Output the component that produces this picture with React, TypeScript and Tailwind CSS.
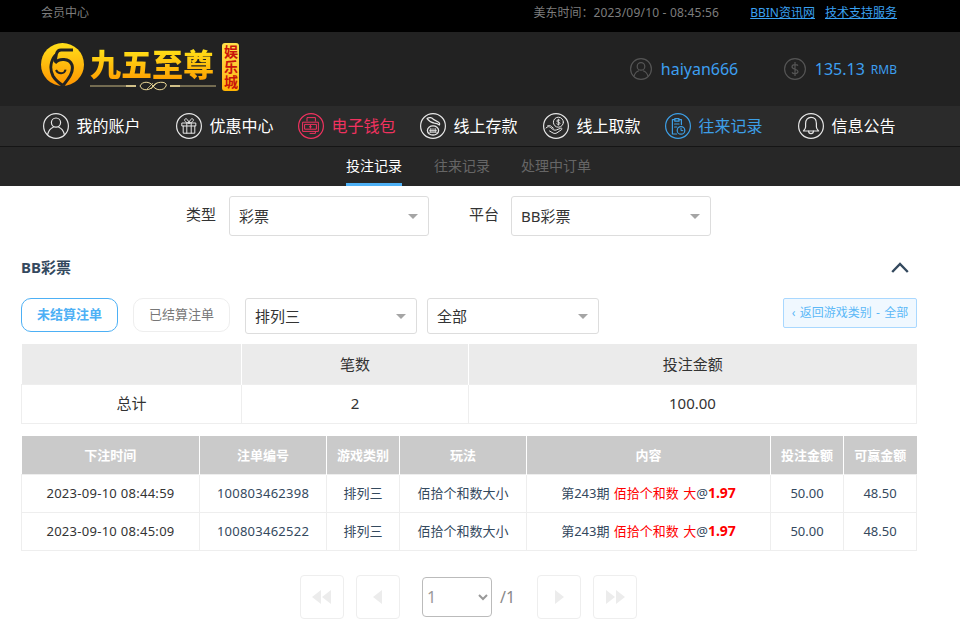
import React from 'react';

const font = { fontFamily: '"Noto Sans", "Noto Sans CJK SC", sans-serif' };

type IconProps = { color: string };

function Ring({ color, children }: IconProps & { children: React.ReactNode }) {
  return (
    <svg width="26" height="26" viewBox="0 0 26 26" fill="none" stroke={color} strokeWidth="1" strokeLinecap="round" strokeLinejoin="round" className="shrink-0">
      <circle cx="13" cy="13" r="12.4" strokeWidth="1.2" />
      {children}
    </svg>
  );
}

const navIcons: Record<string, (color: string) => React.ReactNode> = {
  user: (c) => (
    <Ring color={c}>
      <circle cx="13" cy="9.6" r="4.6" strokeWidth="1.2" />
      <path d="M4.6 21.6c1-4.2 3.6-6.6 5.6-7.4M21.4 21.6c-1-4.2-3.6-6.6-5.6-7.4" strokeWidth="1.2" />
    </Ring>
  ),
  gift: (c) => (
    <Ring color={c}>
      <path d="M6.2 10h13.6v3H6.2zM7.2 13v7.2h11.6V13M10.8 10v10.2M15.2 10v10.2" />
      <path d="M13 10c-2.6-.2-5-1.6-4.2-3.6.9-1.6 3.2-.4 4.2 3.6zM13 10c2.6-.2 5-1.6 4.2-3.6-.9-1.6-3.2-.4-4.2 3.6z" />
    </Ring>
  ),
  wallet: (c) => (
    <Ring color={c}>
      <path d="M9 8V4.6h8.4v3.6M17.4 18.4v2H12" />
      <path d="M5 9.2h15.4v9.2H5zM7 11.4h11.4v4.8H7z" />
      <path d="M12.4 12.4v2.8M11.4 13.8h2" />
    </Ring>
  ),
  deposit: (c) => (
    <Ring color={c}>
      <path d="M7 5.6c2.4-1.8 5.2-1 6.4.8l4.8 2.6c1.4.8 1.8 2 1.2 3-1.6-1-3.2-1.6-5-1.8-2.4-.4-5-1.6-7.4-4.6z" strokeWidth="1.2" />
      <ellipse cx="13" cy="17.4" rx="5.6" ry="4.6" strokeWidth="1.3" />
      <path d="M9.6 17.4h6.8M9.6 19.2h6.8M10.4 15.6v3.6M12 15.6v3.6M14 15.6v3.6M15.6 15.6v3.6" strokeWidth=".8" />
    </Ring>
  ),
  withdraw: (c) => (
    <Ring color={c}>
      <circle cx="15.4" cy="9.2" r="5" />
      <path d="M15.4 6.2v6M17 7.4c-.6-.8-3.2-.8-3.2.7s3.2.7 3.2 2.2-2.6 1.4-3.2.6" strokeWidth=".9" />
      <path d="M3 15c1.6-1.6 3-1.8 4.4-.6l2.8 2.2c1 .8 2.8.6 3.6.2l4-1.6c1-.3 1.6.6.8 1.4l-4.6 3.2c-1.4.9-2.8.8-4 .2l-3.4-2M4.6 12.8c1.2-.6 2.6-.4 3.6.6l2.2 1.8" />
    </Ring>
  ),
  records: (c) => (
    <Ring color={c}>
      <path d="M11.6 21H7.4V6.6h2.4M14 6.6h2.4v5" strokeWidth="1.2" />
      <path d="M9.8 5.6h4.2v2.6H9.8zM9.6 11h4.4M9.6 14h2.2" strokeWidth="1.2" />
      <circle cx="16" cy="17.4" r="3.8" strokeWidth="1.2" />
      <path d="M16 15.4v2.2h1.8" />
    </Ring>
  ),
  bell: (c) => (
    <Ring color={c}>
      <path d="M13 4.4c-3.4 0-5.4 2.6-5.4 6v3.6c0 1.6-1 2.6-2.2 4h15.2c-1.2-1.4-2.2-2.4-2.2-4v-3.6c0-3.4-2-6-5.4-6z" strokeWidth="1.2" />
      <path d="M10.6 18.2c0 3.2 4.8 3.2 4.8 0" strokeWidth="1.2" />
    </Ring>
  ),
};

const navItems = [
  { label: '我的账户', icon: 'user', color: '#ffffff', w: 'w-[133px]' },
  { label: '优惠中心', icon: 'gift', color: '#ffffff', w: 'w-[122px]' },
  { label: '电子钱包', icon: 'wallet', color: '#f0325f', w: 'w-[122px]' },
  { label: '线上存款', icon: 'deposit', color: '#ffffff', w: 'w-[123px]' },
  { label: '线上取款', icon: 'withdraw', color: '#ffffff', w: 'w-[122px]' },
  { label: '往来记录', icon: 'records', color: '#3d9fe6', w: 'w-[133px]' },
  { label: '信息公告', icon: 'bell', color: '#ffffff', w: 'w-[122px]' },
];

function Logo() {
  return (
    <div className="flex items-start pt-[11px] pl-[41px]">
      <svg width="43" height="43" viewBox="0 0 43 43" className="shrink-0">
        <defs>
          <linearGradient id="coin" x1="0" y1="0" x2="0" y2="1">
            <stop offset="0" stopColor="#ffdf1a" />
            <stop offset="1" stopColor="#ff9400" />
          </linearGradient>
        </defs>
        <circle cx="21.5" cy="21.5" r="21.5" fill="url(#coin)" />
        <g fill="none" stroke="#222222" strokeWidth="3">
          <path d="M32 7H20c-2.6 0-4 1.6-4.6 4L14 19" />
          <path d="M14.6 12C9.6 18 8.4 26 12 33c2.4 4.2 6 7 10 9.6" />
          <path d="M14 20c4-5 14.4-5 17 2 2 7-3.4 13.6-9 20.6" />
          <path d="M15 27c2 4.4 8.6 4.2 9.6-.4" strokeWidth="2" />
        </g>
      </svg>
      <div className="ml-[6px] w-[126px] pt-[3px]">
        <div className="bg-gradient-to-b from-[#ffe81a] to-[#ff9c00] bg-clip-text text-[31px] leading-[36px] font-black whitespace-nowrap text-transparent">
          九五至尊
        </div>
        <svg width="126" height="10" viewBox="0 0 126 10" className="mt-[-1px] block" fill="none" stroke="#f0dc9a">
          <path d="M0 5h46M80 5h46" strokeWidth=".8" />
          <path d="M36 5h10M80 5h10" strokeWidth="1.6" />
          <path d="M50 5c2-5 10-5 13 0s11 5 13 0-10-5-13 0-11 5-13 0z" strokeWidth="1" />
          <path d="M57 8l6-6M61 8l6-6" strokeWidth=".7" />
        </svg>
      </div>
      <div className="ml-[6px] flex h-[48px] w-[17px] items-center justify-center rounded-[3px] bg-gradient-to-b from-[#ffe14a] to-[#ffb400] text-[14px] leading-[17px] font-bold tracking-[1px] text-[#c8140a] [writing-mode:vertical-rl]">
        娱乐城
      </div>
    </div>
  );
}

function Caret() {
  return <span className="h-0 w-0 border-x-[5px] border-t-[5px] border-x-transparent border-t-[#a5a5a5]" />;
}

function FakeSelect({ value, className }: { value: string; className: string }) {
  return (
    <div className={`flex items-center justify-between rounded-[3px] border border-[#dddddd] bg-white text-[15px] text-[#333333] ${className}`}>
      <span>{value}</span>
      <Caret />
    </div>
  );
}

function PageBtn({ d }: { d: string }) {
  return (
    <button className="flex h-[44px] w-[44px] items-center justify-center rounded-[4px] border border-[#eeeeee] bg-white">
      <svg width="22" height="14" viewBox="0 0 22 14" fill="#ececec">
        <path d={d} />
      </svg>
    </button>
  );
}

const rows = [
  { time: '2023-09-10 08:44:59', id: '100803462398' },
  { time: '2023-09-10 08:45:09', id: '100803462522' },
];

const headers = ['下注时间', '注单编号', '游戏类别', '玩法', '内容', '投注金额', '可赢金额'];

export default function App() {
  return (
    <div style={font} className="min-h-[627px] bg-white text-[14px]">
      <div className="flex h-[32px] justify-between bg-black pt-[5px] pr-[63px] pl-[41px] text-[12px] leading-[16px] text-[#7d7d7d]">
        <span>会员中心</span>
        <div className="flex">
          <span>
            美东时间：<span className="tracking-[0.2px]">2023/09/10 - 08:45:56</span>
          </span>
          <a className="ml-[31px] text-[#3aa2f2] underline">BBIN资讯网</a>
          <a className="ml-[10px] text-[#3aa2f2] underline">技术支持服务</a>
        </div>
      </div>

      <div className="flex h-[74px] justify-between bg-[#222222]">
        <Logo />
        <div className="flex items-center pr-[63px] text-[#3d9ff0]">
          <svg width="22" height="22" viewBox="0 0 22 22" fill="none" stroke="#555555" strokeWidth="1.2">
            <circle cx="11" cy="11" r="10.4" />
            <circle cx="11" cy="8.4" r="3.8" />
            <path d="M4 18.4c.8-3.4 3-5 5-5.6M18 18.4c-.8-3.4-3-5-5-5.6" />
          </svg>
          <span className="ml-[9px] w-[123px] text-[16px]">haiyan666</span>
          <svg width="22" height="22" viewBox="0 0 22 22" fill="none" stroke="#555555" strokeWidth="1.2">
            <circle cx="11" cy="11" r="10.4" />
            <path d="M11 4v14M14 7.6c-.8-1.4-6-1.6-6 1.2S14 11 14 13.6s-5 2.6-6 .8" />
          </svg>
          <span className="ml-[9px] text-[16px]">135.13</span>
          <span className="ml-[6px] pt-[2px] text-[12px]">RMB</span>
        </div>
      </div>

      <nav className="flex h-[40px] items-center bg-[#2b2b2b] pl-[43px]">
        {navItems.map((item) => (
          <a key={item.label} className={`flex items-center gap-[7.5px] text-[16px] ${item.w}`} style={{ color: item.color }}>
            {navIcons[item.icon](item.color === '#ffffff' ? '#e6e6e6' : item.color)}
            <span className="whitespace-nowrap">{item.label}</span>
          </a>
        ))}
      </nav>

      <div className="flex h-[40px] border-t border-[#151515] bg-[#272727] pl-[346px] text-[14px] leading-[37px] text-[#666666]">
        <a className="h-[39px] w-[56px] border-b-[3px] border-[#4db0f5] whitespace-nowrap text-white">投注记录</a>
        <a className="ml-[32px] w-[56px] whitespace-nowrap">往来记录</a>
        <a className="ml-[31px] whitespace-nowrap">处理中订单</a>
      </div>

      <div className="flex items-center pt-[10px] pl-[186px] text-[15px] text-[#333333]">
        <span className="mb-[3px]">类型</span>
        <FakeSelect value="彩票" className="ml-[13px] h-[40px] w-[200px] pr-[10px] pl-[9px]" />
        <span className="mb-[3px] ml-[40px]">平台</span>
        <FakeSelect value="BB彩票" className="ml-[12px] h-[40px] w-[200px] pr-[10px] pl-[9px]" />
      </div>

      <div className="mt-[21px] ml-[21px] flex h-[20px] w-[896px] items-center justify-between pr-[8px]">
        <b className="text-[15px] font-bold text-[#34495e]">BB彩票</b>
        <svg width="18" height="11" viewBox="0 0 18 11" fill="none" stroke="#34495e" strokeWidth="2.4" className="mt-[1px]">
          <path d="M1.2 10L9 2l7.8 8" />
        </svg>
      </div>

      <div className="mt-[21px] ml-[21px] flex w-[896px] items-start">
        <button className="h-[34px] w-[97px] rounded-[10px] border border-[#4db0f5] text-[13px] font-bold text-[#4db0f5]">未结算注单</button>
        <button className="ml-[15px] h-[34px] w-[97px] rounded-[10px] border border-[#eeeeee] text-[13px] text-[#777777]">已结算注单</button>
        <FakeSelect value="排列三" className="ml-[15px] h-[36px] w-[172px] pr-[10px] pl-[9px]" />
        <FakeSelect value="全部" className="ml-[10px] h-[36px] w-[172px] pr-[10px] pl-[9px]" />
        <button className="ml-auto h-[30px] w-[134px] rounded-[2px] border border-[#a9d8ff] bg-[#f0f8ff] text-[12px] whitespace-nowrap text-[#5cb8f7] [word-spacing:1.2px]">‹ 返回游戏类别 - 全部</button>
      </div>

      <table className="mt-[10px] ml-[21px] w-[896px] table-fixed border-collapse text-center text-[15px] text-[#333333]">
        <colgroup>
          <col className="w-[220px]" />
          <col className="w-[227px]" />
          <col />
        </colgroup>
        <thead>
          <tr className="h-[40px] bg-[#ebebeb]">
            <th className="border-r border-white font-normal" />
            <th className="border-r border-white font-normal">笔数</th>
            <th className="font-normal">投注金额</th>
          </tr>
        </thead>
        <tbody>
          <tr className="h-[39px]">
            <td className="border border-[#eeeeee]">总计</td>
            <td className="border border-[#eeeeee]">2</td>
            <td className="border border-[#eeeeee]">100.00</td>
          </tr>
        </tbody>
      </table>

      <table className="mt-[12px] ml-[21px] w-[896px] table-fixed border-collapse text-center text-[13px] text-[#34495e]">
        <colgroup>
          <col className="w-[178px]" />
          <col className="w-[127px]" />
          <col className="w-[73px]" />
          <col className="w-[127px]" />
          <col className="w-[244px]" />
          <col className="w-[73px]" />
          <col />
        </colgroup>
        <thead>
          <tr className="h-[39px] bg-[#cacaca] text-white">
            {headers.map((h, i) => (
              <th key={h} className={`pt-[1px] text-[13px] font-bold whitespace-nowrap ${i < 6 ? 'border-r border-white' : ''}`}>
                {h}
              </th>
            ))}
          </tr>
        </thead>
        <tbody>
          {rows.map((r) => (
            <tr key={r.id} className="h-[38px]">
              <td className="border border-[#eeeeee] tracking-[0.28px] text-[#333333]">{r.time}</td>
              <td className="border border-[#eeeeee] tracking-[0.25px]">{r.id}</td>
              <td className="border border-[#eeeeee]">排列三</td>
              <td className="border border-[#eeeeee]">佰拾个和数大小</td>
              <td className="border border-[#eeeeee] whitespace-nowrap [word-spacing:1px]">
                第243期 <span className="text-[#ff0000]">佰拾个和数 大</span>@<b className="text-[14px] leading-none text-[#ff0000]">1.97</b>
              </td>
              <td className="border border-[#eeeeee]">50.00</td>
              <td className="border border-[#eeeeee]">48.50</td>
            </tr>
          ))}
        </tbody>
      </table>

      <div className="mt-[24px] ml-[300px] flex items-center">
        <PageBtn d="M10 0v14L1 7zM20 0v14l-9-7z" />
        <div className="ml-[12px]">
          <PageBtn d="M15 0v14L6 7z" />
        </div>
        <select className="ml-[22px] h-[40px] w-[70px] rounded-[4px] border border-[#bbbbbb] bg-white text-[16px] text-[#999999]">
          <option>1</option>
        </select>
        <span className="ml-[8px] w-[37px] text-[16px] text-[#888888]">/1</span>
        <PageBtn d="M7 0v14l9-7z" />
        <div className="ml-[12px]">
          <PageBtn d="M2 0v14l9-7zM12 0v14l9-7z" />
        </div>
      </div>
    </div>
  );
}
